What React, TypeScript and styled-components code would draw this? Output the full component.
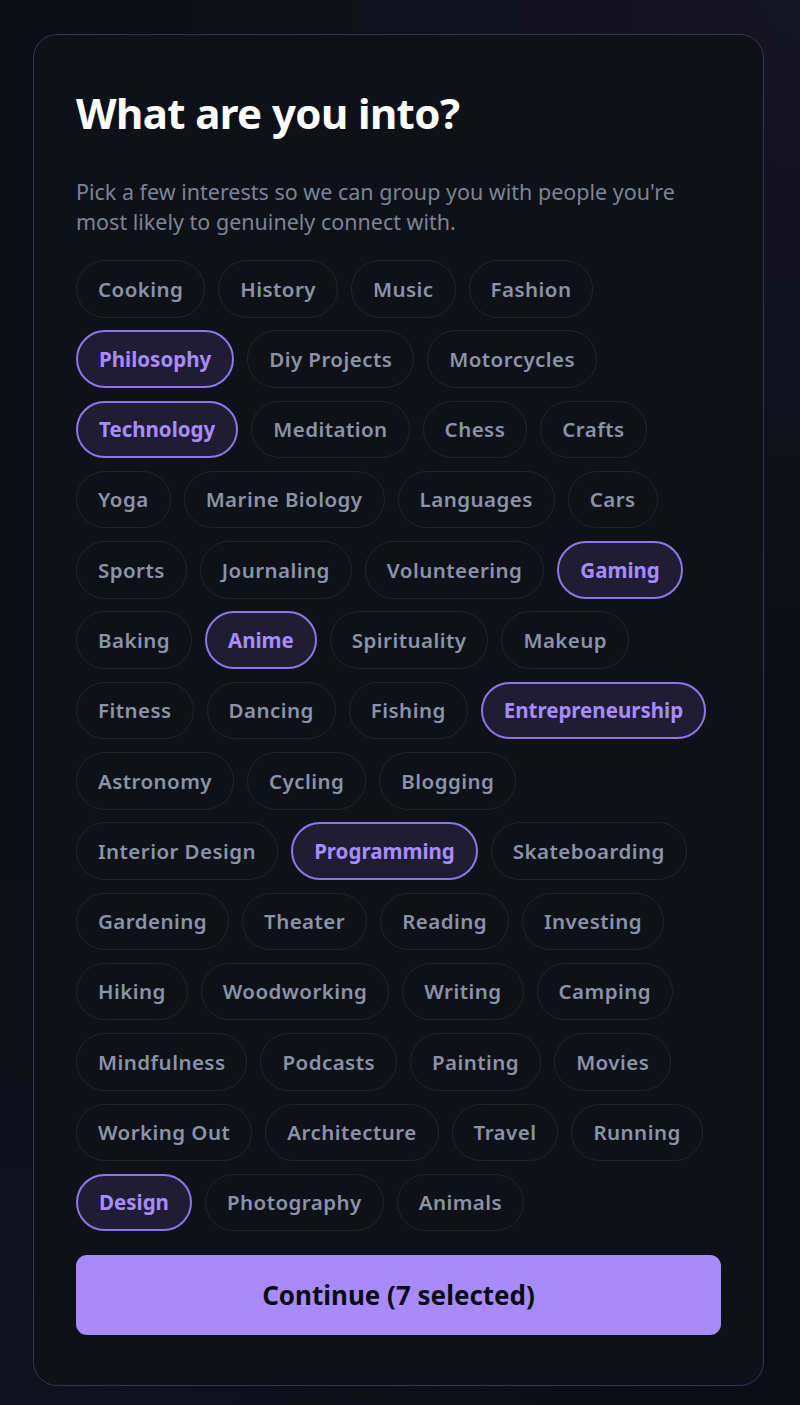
import React, { useState } from "react";
import styled, { createGlobalStyle } from "styled-components";

const GlobalStyle = createGlobalStyle`
  html, body {
    margin: 0;
    padding: 0;
    background: #0c0d14;
  }
  body {
    font-family: "Noto Sans", "Open Sans", sans-serif;
    -webkit-font-smoothing: antialiased;
  }
  * { box-sizing: border-box; }
`;

const Page = styled.div`
  min-height: 1405px;
  padding: 34px 0 19px;
  background:
    radial-gradient(circle at 100% 0%, rgba(40, 36, 60, 0.35), transparent 45%),
    radial-gradient(circle at 0% 100%, rgba(30, 28, 48, 0.3), transparent 45%),
    #0c0d14;
  display: flex;
  justify-content: center;
`;

const Card = styled.div`
  width: 731px;
  margin-left: -3px;
  background: #0f1118;
  border: 1.5px solid #38335a;
  border-radius: 24px;
  padding: 53px 42px 48px;
  display: flex;
  flex-direction: column;
`;

const Title = styled.h1`
  margin: 0;
  color: #ffffff;
  font-size: 42px;
  font-weight: 700;
  line-height: 50px;
  letter-spacing: -0.6px;
`;

const Subtitle = styled.p`
  margin: 39px 0 0;
  color: #7c8496;
  font-size: 21.5px;
  line-height: 30px;
`;

const ChipList = styled.div`
  margin-top: 23px;
  display: flex;
  flex-wrap: wrap;
  gap: 12.8px 13px;
`;

const Chip = styled.button<{ $selected: boolean }>`
  font-family: inherit;
  height: 57.5px;
  padding: 0 21px;
  border-radius: 999px;
  border: ${(p) => (p.$selected ? "2px solid #8e76ea" : "1.5px solid #22252e")};
  background: ${(p) => (p.$selected ? "#201c34" : "#0f1118")};
  color: ${(p) => (p.$selected ? "#a68cff" : "#8a93a8")};
  font-size: 20.5px;
  font-weight: ${(p) => (p.$selected ? 700 : 600)};
  letter-spacing: ${(p) => (p.$selected ? "0px" : "0.45px")};
  line-height: 1;
  cursor: pointer;
  display: inline-flex;
  align-items: center;
  white-space: nowrap;
`;

const ContinueButton = styled.button`
  margin-top: 23.5px;
  height: 80px;
  width: 100%;
  border: none;
  border-radius: 11px;
  background: #a78bfa;
  color: #0b0b14;
  font-family: inherit;
  font-size: 26px;
  font-weight: 700;
  cursor: pointer;
`;

const interests = [
  "Cooking", "History", "Music", "Fashion", "Philosophy", "Diy Projects", "Motorcycles",
  "Technology", "Meditation", "Chess", "Crafts", "Yoga", "Marine Biology", "Languages", "Cars",
  "Sports", "Journaling", "Volunteering", "Gaming", "Baking", "Anime", "Spirituality", "Makeup",
  "Fitness", "Dancing", "Fishing", "Entrepreneurship", "Astronomy", "Cycling", "Blogging",
  "Interior Design", "Programming", "Skateboarding", "Gardening", "Theater", "Reading", "Investing",
  "Hiking", "Woodworking", "Writing", "Camping", "Mindfulness", "Podcasts", "Painting", "Movies",
  "Working Out", "Architecture", "Travel", "Running", "Design", "Photography", "Animals",
];

const initialSelected = ["Philosophy", "Technology", "Gaming", "Anime", "Entrepreneurship", "Programming", "Design"];

export default function App() {
  const [selected, setSelected] = useState<string[]>(initialSelected);
  const toggle = (name: string) =>
    setSelected((s) => (s.includes(name) ? s.filter((x) => x !== name) : [...s, name]));

  return (
    <>
      <GlobalStyle />
      <Page>
        <Card>
          <Title>What are you into?</Title>
          <Subtitle>
            Pick a few interests so we can group you with people you're most likely to genuinely connect with.
          </Subtitle>
          <ChipList>
            {interests.map((name) => (
              <Chip key={name} $selected={selected.includes(name)} onClick={() => toggle(name)}>
                {name}
              </Chip>
            ))}
          </ChipList>
          <ContinueButton>Continue ({selected.length} selected)</ContinueButton>
        </Card>
      </Page>
    </>
  );
}
